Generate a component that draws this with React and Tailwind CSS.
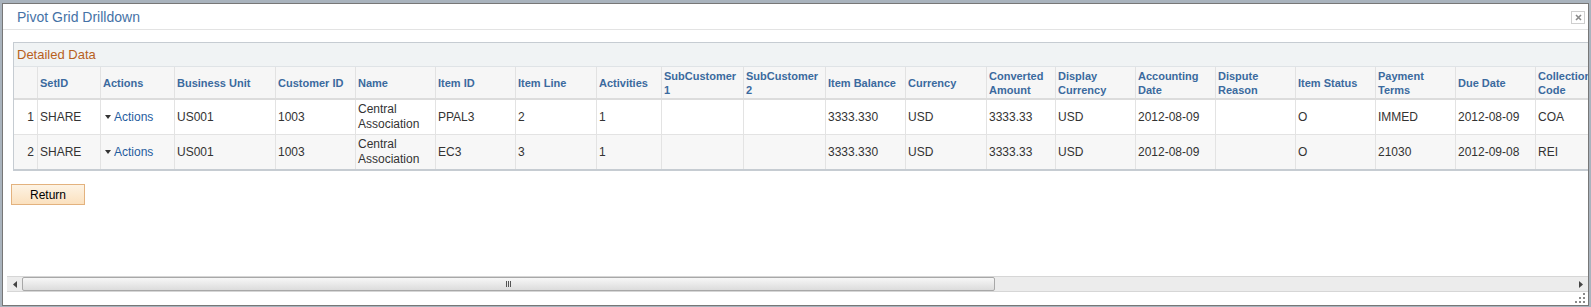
const headers = [
  "",
  "SetID",
  "Actions",
  "Business Unit",
  "Customer ID",
  "Name",
  "Item ID",
  "Item Line",
  "Activities",
  "SubCustomer\n1",
  "SubCustomer\n2",
  "Item Balance",
  "Currency",
  "Converted\nAmount",
  "Display\nCurrency",
  "Accounting\nDate",
  "Dispute\nReason",
  "Item Status",
  "Payment\nTerms",
  "Due Date",
  "Collection\nCode",
];

const rows = [
  ["1", "SHARE", "Actions", "US001", "1003", "Central\nAssociation", "PPAL3", "2", "1", "", "", "3333.330", "USD", "3333.33", "USD", "2012-08-09", "", "O", "IMMED", "2012-08-09", "COA"],
  ["2", "SHARE", "Actions", "US001", "1003", "Central\nAssociation", "EC3", "3", "1", "", "", "3333.330", "USD", "3333.33", "USD", "2012-08-09", "", "O", "21030", "2012-09-08", "REI"],
];

const gridCols =
  "grid grid-cols-[24px_63px_74px_101px_80px_80px_80px_81px_65px_82px_82px_80px_81px_69px_80px_80px_80px_80px_80px_80px_80px]";

function ActionsLink() {
  return (
    <span className="flex items-center text-[#1f5c9e]">
      <svg width="6" height="4" viewBox="0 0 6 4" className="ml-[2px] mr-[3px]">
        <path d="M0 0h6L3 4z" fill="#333" />
      </svg>
      Actions
    </span>
  );
}

function Scrollbar() {
  return (
    <div className="ml-[4px] flex h-[16px] border-y border-[#d6d6d6] bg-[#ececec]">
      {/* left arrow */}
      <div className="flex w-[15px] items-center justify-center">
        <svg width="4" height="7" viewBox="0 0 4 7">
          <path d="M4 0v7L0 3.5z" fill="#444" />
        </svg>
      </div>
      {/* thumb */}
      <div className="flex w-[973px] items-center justify-center rounded-[2px] border border-[#a8a8a8] bg-[linear-gradient(#f7f7f7,#dcdcdc)]">
        <div className="flex gap-[1px]">
          <span className="h-[6px] w-[1px] bg-[#555]" />
          <span className="h-[6px] w-[1px] bg-[#555]" />
          <span className="h-[6px] w-[1px] bg-[#555]" />
        </div>
      </div>
      <div className="flex-1" />
      {/* right arrow */}
      <div className="flex w-[15px] items-center justify-center">
        <svg width="4" height="7" viewBox="0 0 4 7">
          <path d="M0 0v7L4 3.5z" fill="#444" />
        </svg>
      </div>
    </div>
  );
}

export default function App() {
  return (
    <div className="h-[307px] w-[1591px] overflow-hidden bg-[#a9b3bd] pl-[2px] pt-[3px] font-['Liberation_Sans',Arial,sans-serif]">
      <div className="relative flex h-[303px] w-[1587px] flex-col border border-[#777] bg-white">
        {/* Title bar */}
        <div className="flex h-[26px] shrink-0 items-start justify-between border-b border-[#e3e3e3] pl-[14px] pr-[3px]">
          <div className="mt-[5px] text-[14px] leading-[16px] text-[#4572a6]">Pivot Grid Drilldown</div>
          <button className="mt-[7px] flex h-[13px] w-[14px] items-center justify-center border border-[#cfcfcf] bg-white">
            <svg width="7" height="7" viewBox="0 0 7 7">
              <path d="M1 1l5 5M6 1L1 6" stroke="#8a8a8a" strokeWidth="1.6" />
            </svg>
          </button>
        </div>

        {/* Content */}
        <div className="h-[246px] shrink-0 overflow-hidden">
          <div className="ml-[10px] mt-[12px] w-max border-x border-b-2 border-t border-[#c6ccd2]">
            <div className="flex h-[24px] items-center border-b border-[#dfe3e6] bg-[#f0f3f4] pl-[3px] text-[13px] text-[#b8611d]">
              Detailed Data
            </div>

            {/* Header row */}
            <div className={`${gridCols} h-[33px] border-b-2 border-[#dcdcdc] bg-[#f6f6f6]`}>
              {headers.map((h, i) => (
                <div
                  key={i}
                  className="flex items-center whitespace-pre-line border-r border-[#e2e2e2] pl-[2px] text-[11px] font-bold leading-[14px] text-[#3b6a9e]"
                >
                  {h}
                </div>
              ))}
            </div>

            {/* Data rows */}
            {rows.map((r, ri) => (
              <div
                key={ri}
                className={`${gridCols} ${ri === 0 ? "h-[35px] border-b border-[#e3e3e3] bg-white" : "h-[34px] bg-[#f7f7f7]"}`}
              >
                {r.map((c, ci) => (
                  <div
                    key={ci}
                    className={`flex items-center whitespace-pre-line border-r border-[#e3e3e3] text-[12px] leading-[15px] text-[#333] ${
                      ci === 0 ? "justify-end pr-[3px]" : "pl-[2px]"
                    }`}
                  >
                    {ci === 2 ? <ActionsLink /> : c}
                  </div>
                ))}
              </div>
            ))}
          </div>

          <button className="ml-[8px] mt-[13px] h-[21px] w-[74px] border border-[#e3b27e] bg-[linear-gradient(#fdf3e4,#fbe1bf)] text-[12px] text-black">
            Return
          </button>
        </div>

        <Scrollbar />

        {/* resize grip */}
        <svg width="11" height="11" viewBox="0 0 11 11" className="absolute bottom-[1px] right-[2px]">
          <g fill="#8a8a8a">
            <rect x="8" y="0" width="2" height="2" />
            <rect x="4" y="4" width="2" height="2" />
            <rect x="8" y="4" width="2" height="2" />
            <rect x="0" y="8" width="2" height="2" />
            <rect x="4" y="8" width="2" height="2" />
            <rect x="8" y="8" width="2" height="2" />
          </g>
        </svg>
      </div>
    </div>
  );
}
